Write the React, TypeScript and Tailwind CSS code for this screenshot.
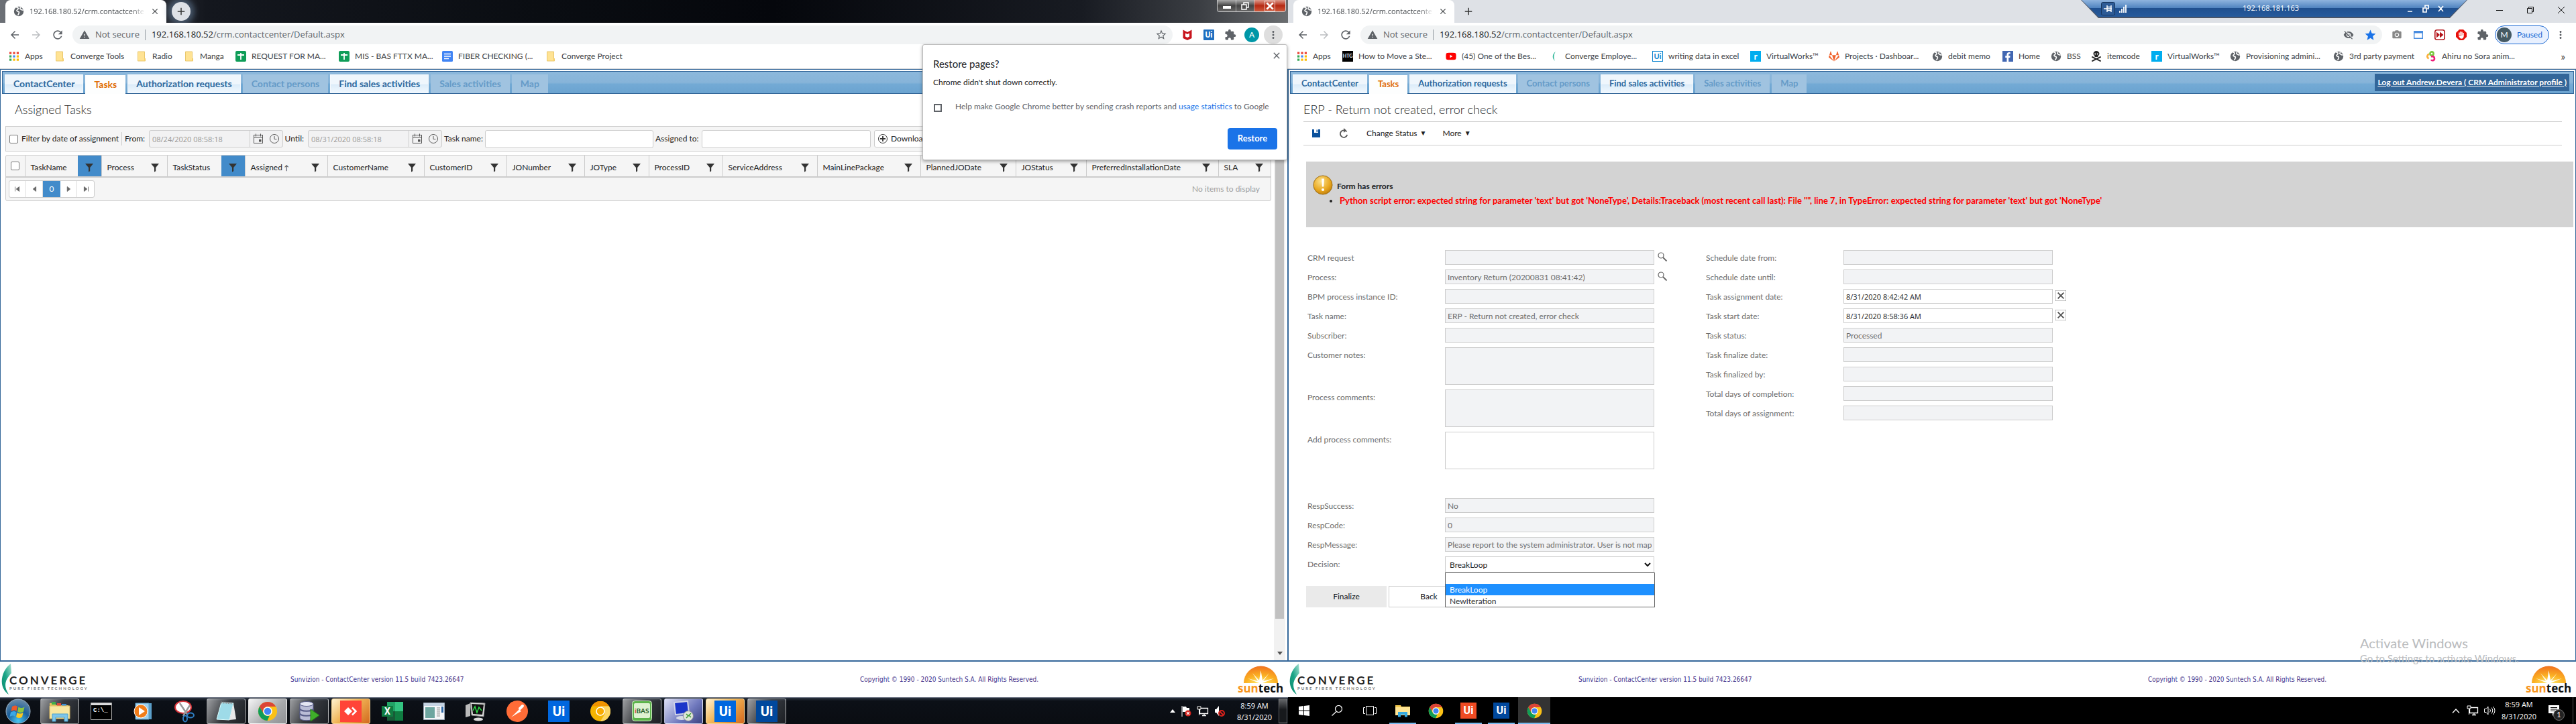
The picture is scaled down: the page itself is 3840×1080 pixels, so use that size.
import React from 'react';
import type { ReactNode } from 'react';
import {
  MdAdd, MdArrowBack, MdArrowForward, MdClose, MdExtension, MdMoreVert, MdPhotoCamera,
  MdRefresh, MdStar, MdStarBorder, MdVisibilityOff, MdWarning,
} from 'react-icons/md';
import { FaFacebookF, FaGitlab, FaSkullCrossbones, FaYoutube } from 'react-icons/fa';

/* ---------- small drawings ---------- */

const Globe = () => (
  <svg viewBox="0 0 16 16" className="size-4 shrink-0">
    <circle cx="8" cy="8" r="7.2" fill="#5f6368" />
    <path d="M5 2.2c1.8-.2 2.6 1 2 2.2-.5 1-2.2 1.200-2 2.600.2 1.300 2.300.8 3.200 1.800.9 1.200-.4 2.600-1.200 4.400M10.500 2.400c-1 .9-.8 2 .2 2.300 1.200.4 1.600 1.300 3.300 1.300" stroke="#fff" strokeWidth="1.700" fill="none" strokeLinecap="round" />
  </svg>
);

const Folder = () => (
  <svg viewBox="0 0 16 16" className="size-4 shrink-0">
    <path d="M2.500 1h10v10.500h1V15h-11z" fill="#ffe394" stroke="#e3bd55" strokeWidth=".8" />
    <path d="M12 11h1.800v3.500H12z" fill="#f5cf6b" />
  </svg>
);

const AppsGrid = () => {
  const colors = ['#ea4335', '#ea4335', '#ea4335', '#34a853', '#4285f4', '#fbbc05', '#34a853', '#fbbc05', '#fbbc05'];
  return (
    <svg viewBox="0 0 16 16" className="size-4 shrink-0">
      {colors.map((c, i) => (
        <rect key={i} x={1 + (i % 3) * 5.400} y={1.500 + Math.floor(i / 3) * 5} width="3.200" height="3.200" fill={c} />
      ))}
    </svg>
  );
};

const Sheets = () => (
  <svg viewBox="0 0 16 16" className="size-4 shrink-0">
    <rect width="16" height="16" rx="2" fill="#0f9d58" />
    <path d="M3 6h10M8 3v10" stroke="#fff" strokeWidth="1.800" />
  </svg>
);

const Docs = () => (
  <svg viewBox="0 0 16 16" className="size-4 shrink-0">
    <rect width="16" height="16" rx="1.500" fill="#4285f4" />
    <path d="M3 4.500h10M3 8h10M3 11.500h7" stroke="#fff" strokeWidth="1.600" />
  </svg>
);

const Leaf = () => (
  <svg viewBox="0 0 16 16" className="size-4 shrink-0">
    <path d="M10 1C5 4 4 11 9 15 6.500 10 7 5 10 1z" fill="#2bb597" />
  </svg>
);

const Manga = () => (
  <svg viewBox="0 0 16 16" className="size-4 shrink-0" fill="none" strokeWidth="2.600">
    <circle cx="9" cy="4" r="2.600" stroke="#7ac943" />
    <path d="M5 4.500C2 6 1 9 4.500 11.500" stroke="#fbb03b" />
    <path d="M8 8.500c3-1 5 0 5 3s-4 3.500-5 1.500" stroke="#ed1e79" />
  </svg>
);

const Funnel = () => (
  <svg viewBox="0 0 14 14" className="size-3.5" fill="#333">
    <path d="M1 1h12L8.200 7v5.200L6 13.500V7z" />
  </svg>
);

const Calendar = () => (
  <svg viewBox="0 0 16 16" className="size-4" fill="none" stroke="#555">
    <rect x="1.500" y="2.500" width="13" height="12" />
    <path d="M1.500 6h13M4.500.5v4M11.500.5v4" />
    <rect x="9.500" y="9.500" width="2.500" height="2.500" fill="#555" />
  </svg>
);

const Clock = () => (
  <svg viewBox="0 0 16 16" className="size-4" fill="none" stroke="#555">
    <circle cx="8" cy="8" r="6.500" />
    <path d="M8 4v4.500h3.500" />
  </svg>
);

const Magnifier = () => (
  <svg viewBox="0 0 16 16" className="size-4" fill="none" stroke="#666">
    <circle cx="6" cy="6" r="4" strokeWidth="1.200" />
    <path d="M9 9l5.500 5.500" strokeWidth="1.800" />
  </svg>
);

const Chrome = ({ className }: { className: string }) => (
  <svg viewBox="0 0 32 32" className={className}>
    <circle cx="16" cy="16" r="15" fill="#fbc116" />
    <path d="M3 8.500A15 15 0 0 1 29 8.500H16a7.500 7.500 0 0 0-6.500 11.200z" fill="#db4437" />
    <path d="M3 8.500l6.500 11.200A7.500 7.500 0 0 0 19 22.900L15.500 31A15 15 0 0 1 3 8.500z" fill="#0f9d58" />
    <circle cx="16" cy="16" r="7.200" fill="#fff" />
    <circle cx="16" cy="16" r="5.600" fill="#4285f4" />
  </svg>
);

const Converge = () => (
  <svg viewBox="0 0 132 48" className="ml-0.5 h-12 w-[132px]" role="img" aria-label="Converge Pure Fiber Technology">
    <defs>
      <linearGradient id="leafFill" x1="0" y1="1" x2="1" y2="0">
        <stop offset="0" stopColor="#0b8a6d" />
        <stop offset=".5" stopColor="#1ba587" />
        <stop offset="1" stopColor="#a9e0d2" />
      </linearGradient>
    </defs>
    <path d="M14 0C-1 11-5 36 11 46 3 33 5 25 15 14z" fill="url(#leafFill)" />
    <text x="12" y="31" fontFamily="Lato" fontSize="17" fontWeight="700" fill="#222" letterSpacing="3">CONVERGE</text>
    <text x="12" y="39" fontFamily="Lato" fontSize="6" fontWeight="700" fill="#777" letterSpacing="2">PURE FIBER TECHNOLOGY</text>
  </svg>
);

const Suntech = () => (
  <svg viewBox="0 0 76 44" className="mr-0.5 h-11 w-[76px]" role="img" aria-label="suntech">
    <defs>
      <radialGradient id="sunFill" cx=".5" cy="1" r="1">
        <stop offset="0" stopColor="#fff27a" />
        <stop offset=".45" stopColor="#fbb022" />
        <stop offset="1" stopColor="#f1711f" />
      </radialGradient>
    </defs>
    <path d="M12 27a25 25 0 0 1 51 0z" fill="url(#sunFill)" />
    <path d="M37.500 28L18 20l15 4-8-12 10 11 2.500-15L40 23 50 12l-9 12 16-4z" fill="#fff" />
    <text x="3" y="41" fontFamily="Open Sans" fontSize="17" fontWeight="700" fill="#f7941d">sun<tspan fill="#111">tech</tspan></text>
  </svg>
);

const ui = 'flex items-center justify-center font-[Roboto] font-bold text-white';
const digits = "font-['Open_Sans'] text-[11px]";

/* ---------- browser chrome ---------- */

type Mark = { icon: ReactNode; label: string; width: string };

function BrowserTab() {
  return (
    <div className="flex h-full w-60 items-center gap-2 rounded-t-lg bg-white pr-2.5 pl-3">
      <Globe />
      <span className="w-[174px] font-['Open_Sans'] text-[11px] whitespace-nowrap text-[#45494d] [mask-image:linear-gradient(90deg,#000_88%,transparent)]">
        192.168.180.52/crm.contactcente
      </span>
      <button aria-label="Close tab"><MdClose className="size-3.5 text-[#3c4043]" /></button>
    </div>
  );
}

function AddressRow({ inBox, actions, children }: { inBox: ReactNode; actions: ReactNode; children?: ReactNode }) {
  return (
    <div className="relative flex h-9 items-center bg-white pr-1.5 pl-1.5 text-[#5f6368]">
      <button aria-label="Back" className="flex w-8 justify-center"><MdArrowBack className="size-[18px]" /></button>
      <button aria-label="Forward" className="flex w-8 justify-center text-[#bcbec1]"><MdArrowForward className="size-[18px]" /></button>
      <button aria-label="Reload" className="flex w-8 justify-center"><MdRefresh className="size-5" /></button>
      <div className="mx-1.5 flex h-7 min-w-0 flex-1 items-center rounded-full bg-[#f1f3f4] pr-2 pl-2.5 text-[13px]">
        <MdWarning className="size-4" />
        <span className="ml-2 font-['Open_Sans']">Not secure</span>
        <span className="mr-[9px] ml-2 h-4 w-px bg-[#9aa0a6]" />
        <label className="flex min-w-0 flex-1 items-center font-['Open_Sans']">
          <span className="text-[#202124]">192.168.180.52</span>
          <input aria-label="Address" readOnly defaultValue="/crm.contactcenter/Default.aspx" className="min-w-0 flex-1 bg-transparent outline-none" />
        </label>
        {inBox}
      </div>
      {actions}
      {children}
    </div>
  );
}

function Bookmarks({ items, more }: { items: Mark[]; more?: boolean }) {
  return (
    <nav className="flex h-[33px] items-center gap-4 border-b border-[#d3d5d8] bg-white pb-1 pl-[13px] text-xs whitespace-nowrap text-[#3c4043]">
      {items.map((m, i) => (
        <a key={i} href="#" className="flex items-center gap-2">
          {m.icon}
          <span className={m.width}>{m.label}</span>
        </a>
      ))}
      {more && <button aria-label="More bookmarks" className="mr-4 ml-auto text-base">»</button>}
    </nav>
  );
}

const leftMarks: Mark[] = [
  { icon: <AppsGrid />, label: 'Apps', width: 'w-7' },
  { icon: <Folder />, label: 'Converge Tools', width: 'w-[82px]' },
  { icon: <Folder />, label: 'Radio', width: 'w-[31px]' },
  { icon: <Folder />, label: 'Manga', width: 'w-[37px]' },
  { icon: <Sheets />, label: 'REQUEST FOR MA...', width: 'w-[114px]' },
  { icon: <Sheets />, label: 'MIS - BAS FTTX MA...', width: 'w-[114px]' },
  { icon: <Docs />, label: 'FIBER CHECKING (...', width: 'w-[114px]' },
  { icon: <Folder />, label: 'Converge Project', width: 'w-[92px]' },
];

const R = () => <span className="flex size-4 shrink-0 items-center justify-center bg-[#00adef] text-sm leading-none font-bold text-white">r</span>;

const rightMarks: Mark[] = [
  { icon: <AppsGrid />, label: 'Apps', width: 'w-7' },
  { icon: <span className="flex size-4 shrink-0 items-center justify-center bg-black text-[7px] font-bold text-white">HTG</span>, label: 'How to Move a Ste...', width: 'w-[114px]' },
  { icon: <FaYoutube className="size-4 shrink-0 text-[#f00]" />, label: '(45) One of the Bes...', width: 'w-[114px]' },
  { icon: <Leaf />, label: 'Converge Employe...', width: 'w-[114px]' },
  { icon: <span className="flex size-4 shrink-0 items-center justify-center border border-[#0b84d0] bg-white text-[11px] font-bold text-[#0b84d0]">Ui</span>, label: 'writing data in excel', width: 'w-[106px]' },
  { icon: <R />, label: 'VirtualWorks™', width: 'w-[77px]' },
  { icon: <FaGitlab className="size-4 shrink-0 text-[#f0612b]" />, label: 'Projects · Dashboar...', width: 'w-[114px]' },
  { icon: <Globe />, label: 'debit memo', width: 'w-[65px]' },
  { icon: <span className="flex size-4 shrink-0 items-end justify-center bg-[#4267b2]"><FaFacebookF className="size-3.5 text-white" /></span>, label: 'Home', width: 'w-8' },
  { icon: <Globe />, label: 'BSS', width: 'w-5' },
  { icon: <FaSkullCrossbones className="size-4 shrink-0 text-[#222]" />, label: 'itemcode', width: 'w-[50px]' },
  { icon: <R />, label: 'VirtualWorks™', width: 'w-[77px]' },
  { icon: <Globe />, label: 'Provisioning admini...', width: 'w-[114px]' },
  { icon: <Globe />, label: '3rd party payment', width: 'w-[98px]' },
  { icon: <Manga />, label: 'Ahiru no Sora anim...', width: 'w-[114px]' },
];

/* ---------- application page ---------- */

const sections = [
  { name: 'ContactCenter' },
  { name: 'Tasks', active: true },
  { name: 'Authorization requests' },
  { name: 'Contact persons', off: true },
  { name: 'Find sales activities' },
  { name: 'Sales activities', off: true },
  { name: 'Map', off: true },
];

function SectionBar({ large, children }: { large?: boolean; children?: ReactNode }) {
  return (
    <header className="mt-0.5 mr-0.5 ml-0.5 flex h-[34px] items-end border border-[#336699] bg-[linear-gradient(#8cb8dc_0%,#87b4d9_50%,#73aad5_58%,#6ba3d0_100%)] pl-[3px]">
      <nav className={large ? 'flex items-end gap-[3px] text-sm font-bold' : 'flex items-end gap-[3px] text-[13px] font-bold'}>
        {sections.map((s) => (
          <button
            key={s.name}
            disabled={s.off}
            className={
              s.active
                ? '-mb-px h-7 bg-[#fdfefe] px-[13px] text-[#e17009]'
                : s.off
                  ? 'h-7 bg-[#a0c3e0] px-[13px] text-[#659bc8]'
                  : 'h-7 border border-[#f4f9fd] bg-[linear-gradient(#eff6fc_50%,#dcecf9_55%,#eff7fe)] px-3 text-[#2e6a9f]'
            }
          >
            {s.name}
          </button>
        ))}
      </nav>
      {children}
    </header>
  );
}

function Footer() {
  return (
    <footer className="flex h-[53px] items-center bg-white font-['DejaVu_Sans_Condensed'] text-[10px] text-[#46358c]">
      <div className="w-[433px]"><Converge /></div>
      <p className="flex-1">Sunvizion - ContactCenter version 11.5 build 7423.26647</p>
      <p className="w-[560px]">Copyright © 1990 - 2020 Suntech S.A. All Rights Reserved.</p>
      <Suntech />
    </footer>
  );
}

const columns: { name: string; width: string; filtered?: boolean; sorted?: boolean }[] = [
  { name: 'TaskName', width: 'w-[114px]', filtered: true },
  { name: 'Process', width: 'w-[98px]' },
  { name: 'TaskStatus', width: 'w-[116px]', filtered: true },
  { name: 'Assigned', width: 'w-[123px]', sorted: true },
  { name: 'CustomerName', width: 'w-36' },
  { name: 'CustomerID', width: 'w-[123px]' },
  { name: 'JONumber', width: 'w-[116px]' },
  { name: 'JOType', width: 'w-24' },
  { name: 'ProcessID', width: 'w-[110px]' },
  { name: 'ServiceAddress', width: 'w-[141px]' },
  { name: 'MainLinePackage', width: 'w-[154px]' },
  { name: 'PlannedJODate', width: 'w-[142px]' },
  { name: 'JOStatus', width: 'w-[105px]' },
  { name: 'PreferredInstallationDate', width: 'w-[197px]' },
  { name: 'SLA', width: '' },
];

const check = 'size-[13px] shrink-0 appearance-none rounded-[2px] border border-[#767676] bg-white';
const box = 'rounded-[3px] border border-[#ccc] bg-white outline-none';

function DateBox({ label, value }: { label: string; value: string }) {
  return (
    <div className="flex items-center gap-1.5">
      <label htmlFor={label} className="w-[30px] text-right">{label}</label>
      <span className="flex h-[26px] w-[200px] items-center rounded-[3px] border border-[#ccc] bg-[#f2f2f3]">
        <input id={label} disabled defaultValue={value} className={'h-full w-[151px] border-r border-[#ccc] px-1 text-[#9a9a9a] ' + digits} />
        <button aria-label={label + ' calendar'} className="flex w-6 justify-center"><Calendar /></button>
        <button aria-label={label + ' time'} className="flex w-6 justify-center"><Clock /></button>
      </span>
    </div>
  );
}

function TaskList() {
  return (
    <main className="flex flex-1">
      <div className="mr-1 ml-[7px] min-w-0 flex-1">
        <h1 className="flex h-12 items-center pb-0.5 pl-3.5 text-lg font-light text-[#222]">Assigned Tasks</h1>
        <form className="flex h-[38px] items-center overflow-hidden border border-[#ccc] bg-[#f5f5f5] pl-[5px] text-xs whitespace-nowrap text-[#222]">
          <label className="flex w-[168px] items-center gap-[5px] border-r border-[#ccc] leading-5">
            <input type="checkbox" className={check} />Filter by date of assignment
          </label>
          <span className="w-1" />
          <DateBox label="From:" value="08/24/2020 08:58:18" />
          <span className="w-px" />
          <DateBox label="Until:" value="08/31/2020 08:58:18" />
          <label htmlFor="taskName" className="ml-[3px] w-[61px]">Task name:</label>
          <input id="taskName" className={'h-[27px] w-[251px] ' + box} />
          <label htmlFor="assignedTo" className="ml-[3px] w-[69px]">Assigned to:</label>
          <input id="assignedTo" className={'h-[27px] w-[252px] ' + box} />
          <button type="button" className={'ml-[5px] flex h-[26px] items-center gap-1 px-1 ' + box}>
            <svg viewBox="0 0 16 16" className="size-4" fill="none" stroke="#333"><circle cx="8" cy="8" r="6.500" /><path d="M8 4v8M4 8h8" strokeWidth="1.800" /></svg>
            Download
          </button>
        </form>
        <div className="mt-[5px] rounded-[3px] border border-[#ccc] bg-[#f5f5f5] text-xs text-[#222]">
          <table className="w-full table-fixed border-collapse whitespace-nowrap">
            <thead>
              <tr className="h-8 border-b-2 border-[#ccc]">
                <th className="w-7 border-r border-[#ccc] p-0">
                  <div className="flex justify-center"><input type="checkbox" aria-label="Select all" className={check} /></div>
                </th>
                {columns.map((c) => (
                  <th key={c.name} className={'border-r border-[#ccc] p-0 font-normal last:border-r-0 ' + c.width}>
                    <div className="flex h-[31px] items-center justify-between pl-2">
                      <span className="pt-1">{c.name}{c.sorted && <span className="text-[10px]"> ↑</span>}</span>
                      <button aria-label={'Filter ' + c.name} className={'flex h-full w-[35px] items-center justify-center pt-1 ' + (c.filtered ? 'bg-[#428bca]' : '')}><Funnel /></button>
                    </div>
                  </th>
                ))}
              </tr>
            </thead>
          </table>
          <div className="flex h-[34px] items-center justify-between pr-4 pl-1">
            <div className="flex h-[26px] overflow-hidden rounded-[3px] border border-[#ccc] bg-white text-[#555]">
              {[
                ['First page', 'M4 4v8M11 4L6 8l5 4z'],
                ['Previous page', 'M11 4L6 8l5 4z'],
                ['0', ''],
                ['Next page', 'M6 4l5 4-5 4z'],
                ['Last page', 'M5 4l5 4-5 4zM12 4v8'],
              ].map(([name, d]) => d ? (
                <button key={name} aria-label={name} className="flex w-[25px] items-center justify-center border-r border-[#ddd] last:border-r-0">
                  <svg viewBox="0 0 16 16" className="size-3.5" fill="#666" stroke="#666"><path d={d} /></svg>
                </button>
              ) : (
                <button key={name} className="w-[26px] bg-[#428bca] text-white">{name}</button>
              ))}
            </div>
            <span className="text-[#a0a0a0]">No items to display</span>
          </div>
        </div>
      </div>
      <div className="mr-[3px] flex w-[17px] flex-col items-center bg-[#f1f1f1]">
        <div className="h-[783px] w-[13px] bg-[#c1c1c1]" />
        <svg viewBox="0 0 8 5" className="mt-auto mb-2 h-[5px] w-2"><path d="M0 0h8L4 5z" fill="#505050" /></svg>
      </div>
    </main>
  );
}

type Field = { label: string; value?: string; on?: boolean; tall?: boolean; extra?: ReactNode; first?: boolean };

const fieldsA: Field[] = [
  { label: 'CRM request', extra: <Magnifier /> },
  { label: 'Process:', value: 'Inventory Return (20200831 08:41:42)', extra: <Magnifier /> },
  { label: 'BPM process instance ID:' },
  { label: 'Task name:', value: 'ERP - Return not created, error check' },
  { label: 'Subscriber:' },
  { label: 'Customer notes:', tall: true },
  { label: 'Process comments:', tall: true },
  { label: 'Add process comments:', tall: true, on: true },
  { label: 'RespSuccess:', value: 'No', first: true },
  { label: 'RespCode:', value: '0' },
  { label: 'RespMessage:', value: 'Please report to the system administrator. User is not mapped' },
];

const clear = <MdClose className="size-4 stroke-1 text-[#555]" />;

const fieldsB: Field[] = [
  { label: 'Schedule date from:' },
  { label: 'Schedule date until:' },
  { label: 'Task assignment date:', value: '8/31/2020 8:42:42 AM', on: true, extra: clear },
  { label: 'Task start date:', value: '8/31/2020 8:58:36 AM', on: true, extra: clear },
  { label: 'Task status:', value: 'Processed' },
  { label: 'Task finalize date:' },
  { label: 'Task finalized by:' },
  { label: 'Total days of completion:' },
  { label: 'Total days of assignment:' },
];

function FieldRow({ f }: { f: Field }) {
  const look = f.on ? 'bg-white text-[#222] ' + digits : 'bg-[#f2f3f5] text-[#6d6d6d]';
  return (
    <div className={'flex items-start ' + (f.first ? 'mt-9' : '')}>
      <label htmlFor={f.label} className="w-[205px] pt-1 leading-4">{f.label}</label>
      {f.tall
        ? <textarea id={f.label} disabled={!f.on} className={'h-14 w-[312px] resize-none border border-[#ccc] px-[3px] ' + look} />
        : <input id={f.label} disabled={!f.on} defaultValue={f.value} className={'h-[22px] w-[312px] border border-[#ccc] px-[3px] ' + look} />}
      {f.extra && <button aria-label={'Action for ' + f.label} className="ml-1 pt-0.5">{f.extra}</button>}
    </div>
  );
}

function TaskDetail() {
  return (
    <main className="relative flex-1 text-xs">
      <div className="mr-5 ml-[22px]">
        <h1 className="flex h-[41px] items-center pt-1 text-lg font-light text-[#222]">ERP - Return not created, error check</h1>
        <div className="flex h-9 items-center border-y border-[#ccc] pl-3 text-[#222]">
          <button aria-label="Save" className="mr-[26px]">
            <svg viewBox="0 0 14 14" className="size-3.5"><path d="M1 1h12v12H1z" fill="#0b519c" /><path d="M4 1h6v5H4z" fill="#fff" /><path d="M7.500 1.500h1.500v3.500H7.500z" fill="#0b519c" /></svg>
          </button>
          <button aria-label="Refresh" className="mr-[26px]">
            <svg viewBox="0 0 16 16" className="size-4" fill="none" stroke="#555" strokeWidth="1.800"><path d="M12.500 5.500A5.300 5.300 0 1 0 13.300 10" /><path d="M8 0l4 3.500L8 7z" fill="#555" stroke="none" /></svg>
          </button>
          <button className="mr-6 flex items-center gap-1">Change Status <span className="text-[10px]">▼</span></button>
          <button className="flex items-center gap-1">More <span className="text-[10px]">▼</span></button>
        </div>
      </div>
      <section role="alert" className="mt-6 mr-[3px] ml-[26px] h-[98px] bg-[#d3d3d3] pt-5 pl-2.5">
        <div className="flex items-center gap-1.5 text-[#222]">
          <svg viewBox="0 0 30 30" className="size-[30px]">
            <defs><radialGradient id="warnFill" cx=".4" cy=".3" r=".8"><stop offset="0" stopColor="#fbe08a" /><stop offset=".6" stopColor="#e9a820" /><stop offset="1" stopColor="#b87505" /></radialGradient></defs>
            <circle cx="15" cy="15" r="14" fill="url(#warnFill)" stroke="#9a6a10" />
            <path d="M13 5.500h4l-.8 12h-2.400z" fill="#fff" /><circle cx="15" cy="22" r="2.100" fill="#fff" />
          </svg>
          <strong className="pt-1 text-xs">Form has errors</strong>
        </div>
        <ul className="ml-10 list-disc text-[13px] leading-4 font-bold marker:text-[#222]">
          <li className="text-[#f00]">Python script error: expected string for parameter 'text' but got 'NoneType', Details:Traceback (most recent call last): File "", line 7, in TypeError: expected string for parameter 'text' but got 'NoneType'</li>
        </ul>
      </section>
      <form className="mt-[34px] ml-[28px] text-[#6d6d6d]">
        <div className="flex">
          <div className="flex w-[594px] flex-col gap-[7px]">
            {fieldsA.map((f) => <FieldRow key={f.label} f={f} />)}
            <div className="flex items-start">
              <label htmlFor="decision" className="w-[205px] pt-1 leading-4">Decision:</label>
              <div className="relative">
                <select id="decision" defaultValue="BreakLoop" className="h-6 w-[312px] appearance-none border border-[#ccc] bg-white pt-0.5 pl-1.5 text-[#222]">
                  <option />
                  <option>BreakLoop</option>
                  <option>NewIteration</option>
                </select>
                <svg viewBox="0 0 10 7" className="absolute top-[9px] right-[5px] h-[7px] w-2.5" fill="none" stroke="#111" strokeWidth="2"><path d="M1 1l4 4 4-4" /></svg>
                <ul role="listbox" aria-label="Decision options" className="absolute top-6 left-0 z-10 h-[52px] w-[313px] border border-[#666] bg-white leading-[17px] text-[#333]">
                  <li role="option" className="h-4" />
                  <li role="option" aria-selected="true" className="bg-[#1e90ff] pl-1.5 text-white">BreakLoop</li>
                  <li role="option" className="pl-1.5">NewIteration</li>
                </ul>
              </div>
            </div>
          </div>
          <div className="flex flex-col gap-[7px]">
            {fieldsB.map((f) => <FieldRow key={f.label} f={f} />)}
          </div>
        </div>
        <div className="mt-5 -ml-0.5 flex gap-[3px] text-[#111]">
          <button type="button" className="h-8 w-[120px] bg-[#eaeaea]">Finalize</button>
          <button type="button" className="h-8 w-[120px] border border-[#ccc] bg-white">Back</button>
        </div>
      </form>
      <aside className="absolute right-[83px] -bottom-2 w-[238px] whitespace-nowrap text-[#b9bbbd]">
        <p className="text-xl leading-6">Activate Windows</p>
        <p className="text-[15px] leading-[22px]">Go to Settings to activate Windows.</p>
      </aside>
    </main>
  );
}

/* ---------- restore prompt ---------- */

function RestorePrompt() {
  return (
    <div role="dialog" aria-label="Restore pages?" className="absolute top-8 right-px z-20 h-[173px] w-[544px] rounded-[3px] border border-[#bbb] bg-white px-[15px] shadow-[0_2px_5px_rgba(0,0,0,.35)]">
      <div className="flex justify-between pt-2">
        <h2 className="pt-2 text-[15px] leading-6 text-[#202124]">Restore pages?</h2>
        <button aria-label="Dismiss" className="-mr-2 self-start"><MdClose className="size-4 text-[#5f6368]" /></button>
      </div>
      <p className="mt-2 text-xs leading-4 text-[#202124]">Chrome didn't shut down correctly.</p>
      <div className="mt-[18px] flex items-center gap-5 text-xs">
        <input id="crash" type="checkbox" className="mt-1 ml-px size-3 appearance-none border-2 border-[#5f6368]" />
        <label htmlFor="crash" className="leading-5 whitespace-nowrap text-[#5f6368]">
          Help make Google Chrome better by sending crash reports and <a href="#" className="text-[#1a73e8]">usage statistics</a> to Google
        </label>
      </div>
      <div className="mt-[22px] -mr-px flex justify-end">
        <button className="h-8 w-[74px] rounded bg-[#1a73e8] text-[13px] font-bold text-white">Restore</button>
      </div>
    </div>
  );
}

/* ---------- taskbars ---------- */

const glass = 'border-white/45 bg-[linear-gradient(115deg,rgba(255,255,255,.6),rgba(255,255,255,.18)_48%,rgba(255,255,255,.08))]';
const bright = 'border-white/70 bg-[linear-gradient(135deg,#f4f4f5,#a7a9ac_60%,#8f9194)]';
const orange = 'border-[#f7d79a] bg-[linear-gradient(135deg,#fff2cf,#f0b455_45%,#d3691d)]';
const blue = 'border-white/60 bg-[linear-gradient(135deg,#dcdff5,#6f78bd_60%,#3b437f)]';

const sevenApps: { name: string; look?: string; icon: ReactNode }[] = [
  { name: 'Explorer', look: glass, icon: <svg viewBox="0 0 32 32" className="size-8"><path d="M1 4h8l2 3h18v20H1z" fill="#e9c65b" /><path d="M4 2h6v4H4z" fill="#3fae49" /><path d="M12 4h6v4h-6z" fill="#e2483d" /><path d="M19 5h7v4h-7z" fill="#3c8fd6" /><path d="M1 8h30v19H1z" fill="#f8e7a1" stroke="#d9b860" /><path d="M5 31V20h23v11h-5v-6H10v6z" fill="#7fc6ea" stroke="#4ba0cd" /></svg> },
  { name: 'Command Prompt', icon: <svg viewBox="0 0 32 26" className="h-[26px] w-8"><path d="M.5.5h31v25H.5z" fill="#000" stroke="#aaa" /><path d="M1 1h30v3H1z" fill="#dcdcdc" /><text x="4" y="14" fontFamily="Liberation Mono" fontSize="9" fontWeight="700" fill="#fff">C:\_</text></svg> },
  { name: 'Media Player', icon: <svg viewBox="0 0 30 30" className="size-[30px]"><path d="M8 3h20v24H8z" fill="#5b9fc9" /><path d="M4 3h20v24H4z" fill="#9dd0ee" stroke="#5b9fc9" /><circle cx="12" cy="15" r="10" fill="#f07d1a" stroke="#fff" /><path d="M9 9l9 6-9 6z" fill="#fff" /></svg> },
  { name: 'Snipping Tool', icon: <svg viewBox="0 0 32 34" className="h-[34px] w-8"><ellipse cx="14" cy="11" rx="12" ry="9" fill="#fff" stroke="#d8343a" strokeWidth="2" /><path d="M9 5l12 18M24 8L14 24" stroke="#999" strokeWidth="2.500" /><ellipse cx="25" cy="23" rx="5" ry="3.500" fill="none" stroke="#2f7fc4" strokeWidth="2" /><ellipse cx="17" cy="28" rx="3" ry="4.500" fill="none" stroke="#2f7fc4" strokeWidth="2" /></svg> },
  { name: 'Notepad', look: glass, icon: <svg viewBox="0 0 32 32" className="size-8"><path d="M9 3l18 1-6 25-19-1z" fill="#9edbe8" stroke="#dff" /><path d="M21 29l6-25 4 24z" fill="#e8e8e8" /><path d="M9 3l18 1" stroke="#888" strokeWidth="3" strokeDasharray="1 1.500" /></svg> },
  { name: 'Chrome', look: bright, icon: <Chrome className="size-[30px]" /> },
  { name: 'Database', look: glass, icon: <svg viewBox="0 0 32 32" className="size-8"><path d="M2 5v21c0 5 20 5 20 0V5z" fill="#b9bcd6" stroke="#555a86" /><ellipse cx="12" cy="5" rx="10" ry="3.500" fill="#e4e6f3" stroke="#555a86" /><path d="M2 12c0 5 20 5 20 0M2 19c0 5 20 5 20 0" fill="none" stroke="#555a86" strokeWidth="2" /><path d="M18 13l13 9-13 9z" fill="#3fae2a" stroke="#257a17" /></svg> },
  { name: 'AnyDesk', look: orange, icon: <svg viewBox="0 0 32 32" className="size-8"><path d="M0 0h32v32H0z" fill="#ff4438" /><path d="M12 10l6 6-6 6-6-6z" fill="#fff" /><path d="M18 10.500l5.500 5.500-5.500 5.500" fill="none" stroke="#fff" strokeWidth="2.500" /></svg> },
  { name: 'Excel', icon: <svg viewBox="0 0 32 28" className="h-7 w-8"><path d="M8 0h24v28H8z" fill="#21a366" /><path d="M20 0h12v14H20z" fill="#33c481" /><path d="M8 14h12v14H8z" fill="#185c37" /><path d="M20 14h12v14H20z" fill="#107c41" /><path d="M0 6h17v16H0z" fill="#107c41" /><text x="4" y="19" fontFamily="Roboto" fontSize="14" fontWeight="700" fill="#fff">X</text></svg> },
  { name: 'Window Tool', icon: <svg viewBox="0 0 32 26" className="h-[26px] w-8"><path d="M.5.500h31v25H.5z" fill="#f4f6f8" stroke="#9aa7b5" /><path d="M1 1h30v4H1z" fill="#c5d3e2" /><path d="M3 7h14v16H3z" fill="#6ea6a0" /><path d="M20 8h5M20 11h5M20 14h5M20 17h5M20 20h5" stroke="#888" /><path d="M27 6h3v9h-3z" fill="#2f6aa8" /></svg> },
  { name: 'Monitor', icon: <svg viewBox="0 0 32 30" className="h-[30px] w-8"><path d="M1 6l7-3v19l-7 2z" fill="#bbb" /><path d="M8 2l22 1-2 20-18-2z" fill="#ddd" stroke="#888" /><path d="M10 4l18 1-2 15-14-1z" fill="#111" /><path d="M12 14l3-6 3 9 3-8 4 5" fill="none" stroke="#2fe04a" strokeWidth="1.500" /><ellipse cx="20" cy="27" rx="7" ry="2.500" fill="#ddd" /></svg> },
  { name: 'Postman', icon: <svg viewBox="0 0 32 32" className="size-8"><circle cx="16" cy="16" r="16" fill="#ff6c37" /><path d="M7 25l12-12 3 3-7 4z" fill="#fff" /><path d="M20 12l4-4" stroke="#fff" strokeWidth="4" strokeLinecap="round" /></svg> },
  { name: 'UiPath Assistant', icon: <span className={'size-8 bg-[#0067df] text-xl ' + ui}>Ui</span> },
  { name: 'Chrome Canary', icon: <svg viewBox="0 0 30 30" className="size-[30px]"><circle cx="15" cy="15" r="15" fill="#f4b400" /><path d="M2 7.500a15 15 0 0 1 26 0H15z" fill="#f09300" /><path d="M15 30a15 15 0 0 0 13-22.500H15l7 11z" fill="#fdd663" /><circle cx="15" cy="15" r="6" fill="#f9ab00" stroke="#fff" strokeWidth="1.500" /></svg> },
  { name: 'iBAS', look: glass, icon: <svg viewBox="0 0 30 32" className="h-8 w-[30px]"><rect x=".5" y=".5" width="29" height="30" rx="4" fill="#5cb34b" stroke="#d9efd0" /><rect x="3" y="4" width="24" height="22" rx="2" fill="#dff2d2" /><text x="4" y="19" fontFamily="Lato" fontSize="10" fontWeight="700" fill="#1d5a22"><tspan fill="#d23c22">i</tspan>BAS</text></svg> },
  { name: 'Remote Desktop', look: blue, icon: <svg viewBox="0 0 32 32" className="size-8"><path d="M2 3l20-2 2 18-20 2z" fill="#1b35c9" stroke="#cfd3e8" strokeWidth="2" /><ellipse cx="13" cy="26" rx="8" ry="3" fill="#d7dae6" /><circle cx="23" cy="23" r="7.500" fill="#dfe6d8" stroke="#889" /><path d="M20 20l3 3-3 3M27 19l-3 3 3 3" fill="none" stroke="#3a9a34" strokeWidth="1.500" /></svg> },
  { name: 'UiPath Studio', look: orange, icon: <span className={'size-8 bg-[#0067df] text-xl ' + ui}>Ui</span> },
  { name: 'UiPath Robot', look: glass, icon: <span className={'size-8 bg-[#00489d] text-xl ' + ui}>Ui</span> },
];

const Lan = () => (
  <svg viewBox="0 0 18 16" className="h-4 w-[18px]" fill="none" stroke="#fff"><path d="M4.500 3.500h12v8h-12zM8 14.500h6M11 11.500v3" strokeWidth="1.300" /><path d="M1 1h5v4H1z" fill="#111" /><path d="M3.500 5v9" /></svg>
);

function SevenTaskbar() {
  return (
    <footer className="flex h-10 items-center border-t border-[#6b7280] bg-[linear-gradient(#2b3441,#0c1017_12%,#0a0d12)] text-xs text-white">
      <button aria-label="Start" className="ml-2 w-[52px]">
        <svg viewBox="0 0 38 38" className="size-[38px]">
          <defs><radialGradient id="orbFill" cx=".5" cy=".9" r=".9"><stop offset="0" stopColor="#49c6f0" /><stop offset=".5" stopColor="#1a5f9c" /><stop offset="1" stopColor="#6f8da8" /></radialGradient></defs>
          <circle cx="19" cy="19" r="18" fill="url(#orbFill)" stroke="#9db3c6" />
          <path d="M10 12c3-2 6-2 8 0l-1.500 7c-2-2-5-2-8 0z" fill="#ee5a2a" />
          <path d="M19.500 12.500c3 2 6 2 9 0l-1.500 7c-3 2-6 2-9 0z" fill="#8cc63f" />
          <path d="M8 20.500c3-2 6-2 8 0L14.500 27c-2-2-5-2-8 0z" fill="#3ba7e4" />
          <path d="M17.500 21c3 2 6 2 9 0l-1.500 6.500c-3 2-6 2-9 0z" fill="#fcc81f" />
        </svg>
      </button>
      <div className="flex gap-1">
        {sevenApps.map((a) => (
          <button key={a.name} aria-label={a.name} className={'flex h-[38px] w-[58px] items-center justify-center rounded-[3px] border ' + (a.look ?? 'border-transparent')}>{a.icon}</button>
        ))}
      </div>
      <div className="ml-auto flex items-center gap-2">
        <button aria-label="Show hidden icons"><svg viewBox="0 0 8 5" className="h-[5px] w-2"><path d="M0 5h8L4 0z" fill="#fff" /></svg></button>
        <svg viewBox="0 0 16 18" className="h-[18px] w-4"><path d="M2 1v16" stroke="#fff" /><path d="M3 2h5l1 2h4v6H3z" fill="#fff" /><circle cx="11" cy="12" r="4.500" fill="#d9221c" /><path d="M9 10l4 4M13 10l-4 4" stroke="#fff" strokeWidth="1.300" /></svg>
        <Lan />
        <svg viewBox="0 0 16 18" className="h-[18px] w-4"><path d="M1 6h2l4-5v15l-4-5H1z" fill="#fff" /><circle cx="11" cy="12" r="4" fill="none" stroke="#d9221c" strokeWidth="2" /><path d="M8.500 9.500l5 5" stroke="#d9221c" strokeWidth="2" /></svg>
        <time className={'w-[72px] text-center leading-[17px] ' + digits}>8:59 AM<br />8/31/2020</time>
      </div>
      <button aria-label="Show desktop" className="mr-px h-[37px] w-[13px] border border-white/30 bg-[linear-gradient(#66686b,#17191c_45%)]" />
    </footer>
  );
}

const tenApps: { name: string; open?: boolean; current?: boolean; icon: ReactNode }[] = [
  { name: 'Start', icon: <svg viewBox="0 0 16 16" className="size-4" fill="#fff"><path d="M0 2l7-1v6.500H0zM8 .9L16 0v7.500H8zM0 8.500h7V15l-7-1zM8 8.500h8V16l-8-1z" /></svg> },
  { name: 'Search', icon: <svg viewBox="0 0 16 16" className="size-4" fill="none" stroke="#fff" strokeWidth="1.200"><circle cx="10.500" cy="5.500" r="5" /><path d="M7 9.500L.5 15.500" /></svg> },
  { name: 'Task View', icon: <svg viewBox="0 0 20 14" className="h-3.5 w-5" fill="none" stroke="#fff"><path d="M4.500.5h11v13h-11zM3 2.500H.5v9H3M17 2.500h2.500v9H17" /></svg> },
  { name: 'File Explorer', open: true, icon: <svg viewBox="0 0 22 19" className="h-[19px] w-[22px]"><path d="M0 1h8l1 2h13v13H0z" fill="#f3c84e" /><path d="M0 4h22v12H0z" fill="#ffe594" /><path d="M4 18.500V11h14v7.500h-4V15H8v3.500z" fill="#35a9e0" /></svg> },
  { name: 'Chrome', icon: <Chrome className="size-[23px]" /> },
  { name: 'UiPath Studio', open: true, icon: <span className={'size-6 bg-[#f04b23] text-base ' + ui}>Ui</span> },
  { name: 'UiPath Robot', open: true, icon: <span className={'size-6 bg-[#00489d] text-base ' + ui}>Ui</span> },
  { name: 'Chrome window', open: true, current: true, icon: <Chrome className="size-[23px]" /> },
];

function TenTaskbar() {
  return (
    <footer className="flex h-10 items-center bg-black text-xs text-white">
      <div className="flex h-full gap-px">
        {tenApps.map((a) => (
          <button key={a.name} aria-label={a.name} className={'flex h-full w-12 flex-col items-center justify-center pt-0.5 ' + (a.current ? 'bg-[#333]' : '')}>
            <span className="flex flex-1 items-center">{a.icon}</span>
            <span className={'h-0.5 ' + (a.open ? 'bg-[#76b9ed] ' : '') + (a.current ? 'w-full' : 'w-10')} />
          </button>
        ))}
      </div>
      <div className="ml-auto flex items-center">
        <svg viewBox="0 0 12 7" className="mr-2.5 h-[7px] w-3" fill="none" stroke="#fff" strokeWidth="1.300"><path d="M1 6.500L6 1l5 5.500" /></svg>
        <Lan />
        <svg viewBox="0 0 18 14" className="ml-2 h-3.5 w-[18px]" fill="none" stroke="#fff"><path d="M.5 4.500h2.500l3-3.500v12L3 9.500H.5zM8.500 4.500q2 2.500 0 5M11 2.500q3.500 4.500 0 9M13.500 1q5 6 0 12" /></svg>
        <time className={'w-[68px] text-center leading-[18px] ' + digits}>8:59 AM<br />8/31/2020</time>
        <button aria-label="Notifications" className="relative ml-2.5 flex h-7 w-8 justify-start">
          <svg viewBox="0 0 16 16" className="mt-1.5 size-4" fill="#fff"><path d="M0 0h16v12H9l-3 4v-4H0z" /><path d="M3 3.500h10M3 6h10M3 8.500h10" stroke="#000" /></svg>
          <span className="absolute top-3 left-[7px] flex size-[17px] items-center justify-center rounded-full border border-[#777] bg-[#222] text-[11px]">1</span>
        </button>
      </div>
      <span className="mr-1 ml-1 h-full w-px bg-[#555]" />
    </footer>
  );
}

/* ---------- the two desktops ---------- */

const slot = 'flex w-8 justify-center';

function LeftDesktop() {
  return (
    <section className="flex min-h-screen min-w-0 flex-col bg-white">
      <div className="relative flex h-[34px] items-center bg-[linear-gradient(90deg,#6c7076_0,#14171e_16%,#0a0d12_42%,#05070c_60%,#181b22_84%,#3a3d42_93%,#6a6d70)] pl-2">
        <BrowserTab />
        <button aria-label="New tab" className="ml-2 flex size-7 items-center justify-center rounded-full bg-[#dee1e6] shadow-[0_0_8px_6px_#6f8cab80]"><MdAdd className="size-[18px] text-[#333]" /></button>
        <div className="mr-[3px] ml-auto flex h-[18px] self-start overflow-hidden rounded-b-[4px] border border-t-0 border-white/70">
          <button aria-label="Minimize" className="flex w-7 items-end justify-center border-r border-white/50 bg-[linear-gradient(#aaa,#444_50%,#666)] pb-1"><span className="h-1 w-3 bg-white" /></button>
          <button aria-label="Restore window" className="flex w-[27px] items-center justify-center border-r border-white/50 bg-[linear-gradient(#aaa,#444_50%,#666)]">
            <svg viewBox="0 0 12 12" className="size-3" fill="none" stroke="#fff" strokeWidth="1.500"><path d="M1 4h7v7H1zM4 3.500V1h7v7H8.500" /></svg>
          </button>
          <button aria-label="Close" className="flex w-[46px] items-center justify-center bg-[linear-gradient(#dd9a8b,#b62a14_50%,#cf5a3c)]"><MdClose className="size-4 stroke-2 text-white" /></button>
        </div>
      </div>
      <AddressRow
        inBox={<button aria-label="Bookmark"><MdStarBorder className="size-[18px]" /></button>}
        actions={
          <>
            <span className={slot}><svg viewBox="0 0 16 16" className="size-4"><path d="M1.500.5L8 4l6.500-3.500V13L8 16l-6.500-3z" fill="#c8151d" /><path d="M5 5.500L8 7l3-1.500v5L8 12l-3-1.500z" fill="#fff" /></svg></span>
            <span className={slot}><span className={'size-4 rounded-[1px] bg-[#1f6fc0] text-xs ' + ui}>Ui</span></span>
            <span className={slot}><MdExtension className="size-[18px]" /></span>
            <span className={slot}><span className="flex size-[22px] items-center justify-center rounded-full bg-[#0097a7] text-xs text-white">A</span></span>
            <button aria-label="Menu" className={slot}><span className="flex size-7 items-center justify-center rounded-full bg-[#dedede]"><MdMoreVert className="size-[18px]" /></span></button>
          </>
        }
      >
        <RestorePrompt />
      </AddressRow>
      <Bookmarks items={leftMarks} />
      <div className="flex flex-1 flex-col border border-b-2 border-[#336699]">
        <SectionBar large />
        <TaskList />
      </div>
      <Footer />
      <SevenTaskbar />
    </section>
  );
}

function RightDesktop() {
  return (
    <section className="flex min-h-screen min-w-0 flex-col bg-white">
      <div className="relative flex h-[34px] items-center bg-[#dee1e6] pl-2">
        <BrowserTab />
        <button aria-label="New tab" className="ml-3 flex"><MdAdd className="size-[18px] text-[#333]" /></button>
        <div className="absolute top-0 right-[162px] h-[27px] w-[576px] bg-[#4a5568] [clip-path:polygon(0_0,100%_0,calc(100%-26px)_100%,26px_100%)]">
          <div className="flex h-[25px] items-center bg-[linear-gradient(#8fb4de,#4f83bf_48%,#20508f_50%,#265a9c)] px-[30px] text-white [clip-path:polygon(1px_0,calc(100%-1px)_0,calc(100%-26px)_100%,26px_100%)]">
            <svg viewBox="0 0 38 20" className="h-5 w-[38px]"><rect x=".5" y=".5" width="20" height="19" rx="2" fill="#2d5b96" stroke="#17345c" /><path d="M4 10h5M9 5v10M9 10h7M15 5v10M9 7.500h6M9 12.500h6" stroke="#fff" strokeWidth="1.500" /><path d="M28 16v-3M31 16v-6M34 16V7M37 16V4" stroke="#fff" strokeWidth="1.800" /></svg>
            <span className="flex-1 pl-3 text-center font-['Open_Sans'] text-[11px]">192.168.181.163</span>
            <svg viewBox="0 0 56 16" className="mr-1 h-4 w-14" fill="none" stroke="#fff" strokeWidth="1.700"><path d="M1 12h7M24 7h5v6h-5zM27 6V3h5v5h-2M47 4l7 8M54 4l-7 8" /></svg>
          </div>
        </div>
        <div className="mr-4 ml-auto flex items-center gap-[34px] pb-1 text-black">
          <button aria-label="Minimize"><svg viewBox="0 0 12 12" className="size-3" stroke="#111"><path d="M1 6.500h10" /></svg></button>
          <button aria-label="Restore window"><svg viewBox="0 0 12 12" className="size-3" fill="none" stroke="#111"><path d="M1.500 3.500h7v7h-7zM3.500 3V1.500h7v7H9" /></svg></button>
          <button aria-label="Close"><svg viewBox="0 0 12 12" className="size-3" stroke="#111"><path d="M1 1l10 10M11 1L1 11" /></svg></button>
        </div>
      </div>
      <AddressRow
        inBox={<>
          <MdVisibilityOff className="mr-[15px] size-4" />
          <button aria-label="Bookmarked"><MdStar className="size-[19px] text-[#1a73e8]" /></button>
        </>}
        actions={
          <>
            <span className={slot}><MdPhotoCamera className="size-4 text-[#888]" /></span>
            <span className={slot}><svg viewBox="0 0 14 12" className="h-3 w-3.5"><path d="M.7.7h12.600v10.600H.7z" fill="#fff" stroke="#4a8de0" strokeWidth="1.400" /><path d="M0 0h14v3.500H0z" fill="#4a8de0" /></svg></span>
            <span className={slot}><svg viewBox="0 0 16 16" className="size-4"><rect x=".8" y=".8" width="14.400" height="14.400" rx="3" fill="#fff" stroke="#b3151b" strokeWidth="1.600" /><path d="M3 3.500L8 8l-5 4.500zM8 3.500L13.500 8 8 12.500z" fill="#b3151b" /></svg></span>
            <span className={slot}><svg viewBox="0 0 16 16" className="size-4"><path d="M5 0h6l5 5v6l-5 5H5l-5-5V5z" fill="#e8110b" /><path d="M5 8V4.500M7 8V3M9 8V3.500M11 8V5v4c0 3-1.500 4-3 4s-2.500-2-3.500-4" stroke="#fff" strokeWidth="1.500" fill="#fff" /></svg></span>
            <span className={slot}><MdExtension className="size-[18px]" /></span>
            <button className="ml-0.5 flex h-7 w-[81px] items-center gap-2 rounded-full border border-[#1967d2] bg-[#e8f0fe] pl-0.5 text-xs text-[#1967d2]">
              <span className="flex size-[22px] items-center justify-center rounded-full bg-[#455a64] text-white">M</span>Paused
            </button>
            <button aria-label="Menu" className="flex w-[34px] justify-center"><MdMoreVert className="size-[18px]" /></button>
          </>
        }
      />
      <Bookmarks items={rightMarks} more />
      <div className="flex flex-1 flex-col border border-b-2 border-[#336699]">
        <SectionBar>
          <a href="#" className="mr-1.5 mb-[3px] ml-auto flex h-[26px] items-center bg-[#336699] px-1 text-xs font-bold text-white underline">Log out Andrew.Devera ( CRM Administrator profile )</a>
        </SectionBar>
        <TaskDetail />
      </div>
      <Footer />
      <TenTaskbar />
    </section>
  );
}

export default function App() {
  return (
    <div className="grid min-h-screen grid-cols-2 font-[Lato,'Open_Sans',sans-serif]">
      <LeftDesktop />
      <RightDesktop />
    </div>
  );
}
